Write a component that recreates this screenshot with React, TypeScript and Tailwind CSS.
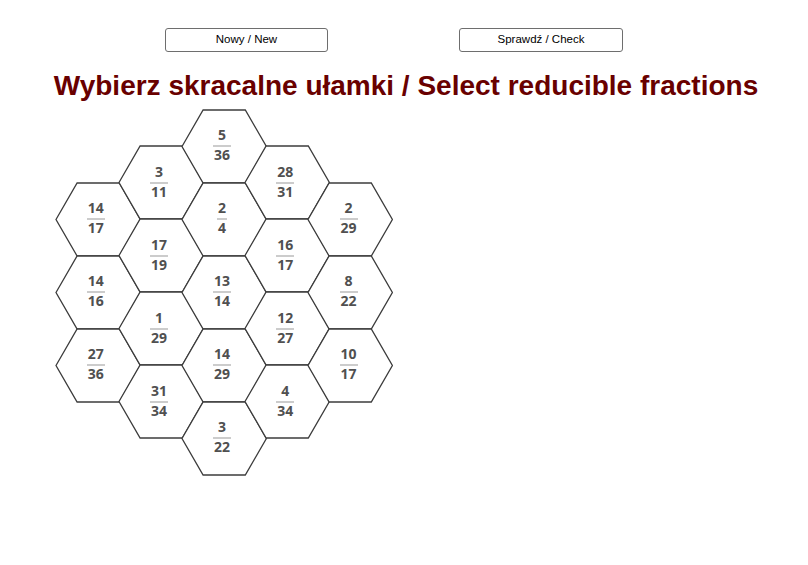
import React from "react";

type Frac = [number, number];

const columns: { offset: string; items: Frac[] }[] = [
  { offset: "mt-[73px]", items: [[14, 17], [14, 16], [27, 36]] },
  { offset: "mt-[36.5px]", items: [[3, 11], [17, 19], [1, 29], [31, 34]] },
  { offset: "mt-0", items: [[5, 36], [2, 4], [13, 14], [14, 29], [3, 22]] },
  { offset: "mt-[36.5px]", items: [[28, 31], [16, 17], [12, 27], [4, 34]] },
  { offset: "mt-[73px]", items: [[2, 29], [8, 22], [10, 17]] },
];

function Hex({ n, d }: { n: number; d: number }) {
  return (
    <div className="relative w-[84.4px] h-[73px] flex items-center justify-center">
      <svg
        className="absolute left-0 top-0 overflow-visible"
        width="84.4"
        height="73"
        viewBox="0 0 84.4 73"
      >
        <polygon
          points="0,36.5 21.1,0 63.3,0 84.4,36.5 63.3,73 21.1,73"
          fill="white"
          stroke="#3c3c3c"
          strokeWidth="1.3"
          strokeLinejoin="miter"
        />
      </svg>
      <div
        className="relative inline-grid justify-items-center text-[14px] leading-[16px] font-bold text-[#505050] -translate-y-[1.5px] -translate-x-[2px]"
        style={{ fontFamily: '"Open Sans", "Noto Sans", sans-serif' }}
      >
        <span className="px-[1px] mb-[3px]">{n}</span>
        <div className="w-full h-px bg-[#9a9a9a]" />
        <span className="px-[1px]">{d}</span>
      </div>
    </div>
  );
}

export default function App() {
  return (
    <div
      className="w-[808px] h-[565px] bg-white pt-[28px] overflow-hidden"
      style={{ fontFamily: '"Liberation Sans", Arial, sans-serif' }}
    >
      <div className="flex h-[24px]">
        <button className="ml-[165px] w-[163px] h-[24px] border border-[#6e6e6e] rounded-[3px] bg-white text-[11.5px] text-black">
          Nowy / New
        </button>
        <button className="ml-[131px] w-[164px] h-[24px] border border-[#6e6e6e] rounded-[3px] bg-white text-[11.5px] text-black">
          Sprawdź / Check
        </button>
      </div>
      <h1 className="mt-[17.5px] h-[32px] text-center text-[28px] leading-[32px] font-bold text-[#690000] pl-[4px] whitespace-nowrap">
        Wybierz skracalne ułamki / Select reducible fractions
      </h1>
      <div className="mt-[8px] ml-[55.5px] flex">
        {columns.map((col, ci) => (
          <div
            key={ci}
            className={`flex flex-col ${col.offset} ${ci > 0 ? "-ml-[21.2px]" : ""}`}
          >
            {col.items.map(([n, d], i) => (
              <Hex key={i} n={n} d={d} />
            ))}
          </div>
        ))}
      </div>
    </div>
  );
}
